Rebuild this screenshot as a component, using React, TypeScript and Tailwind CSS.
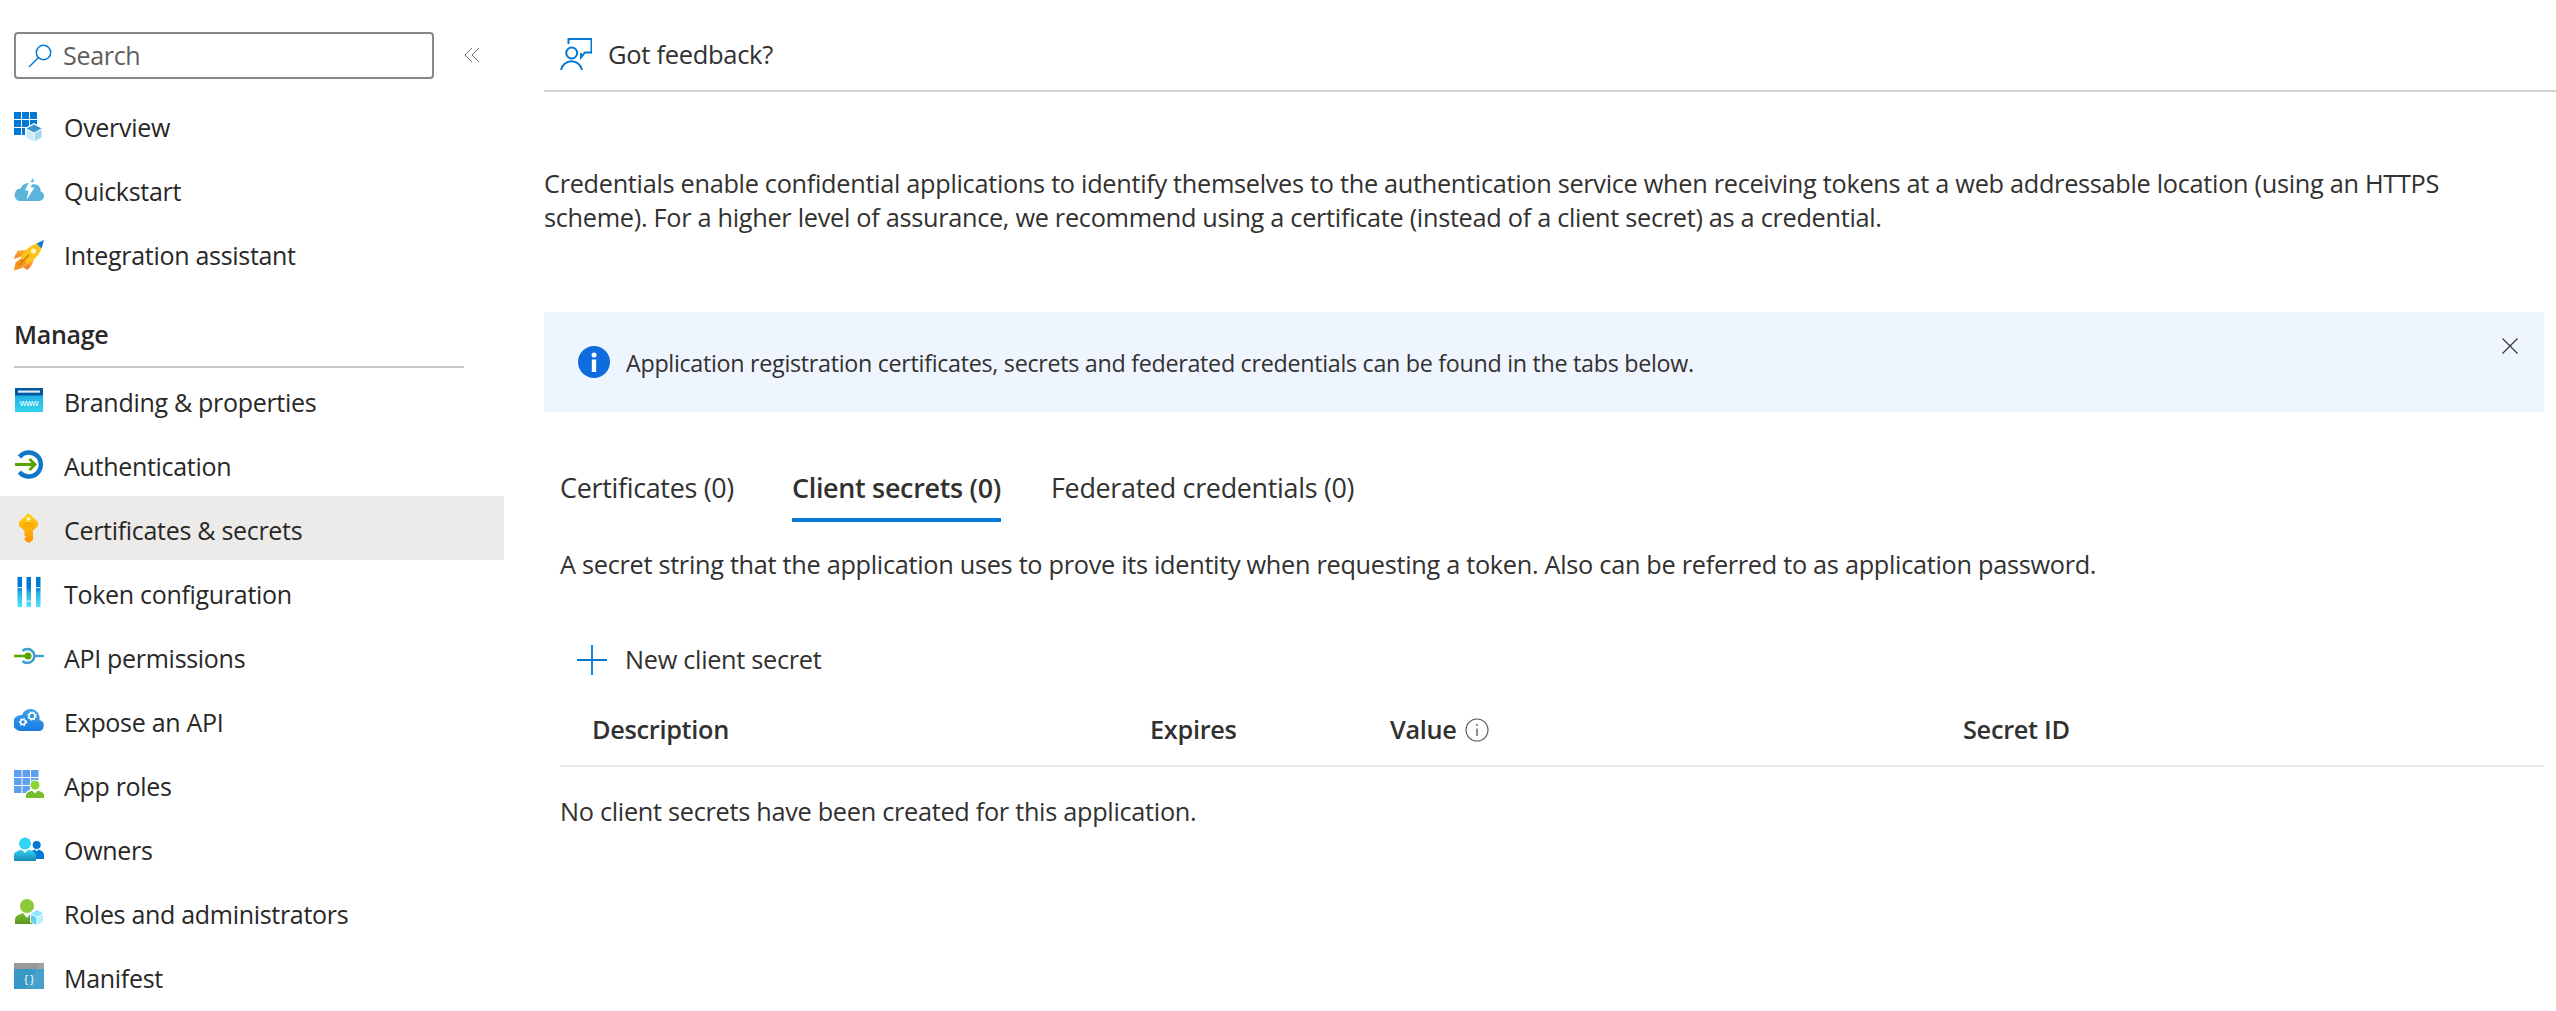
import { ReactNode } from "react";

const Icon = ({ children }: { children: ReactNode }) => (
    <svg viewBox="0 0 30 32" className="w-[30px] h-[32px] shrink-0">{children}</svg>
);

const OverviewIcon = () => (
    <Icon>
        {[0, 8, 16].map((x) => [1, 9, 17].map((y) => <rect key={`${x}-${y}`} x={x} y={y} width="7" height="7" fill="#0078d4" />))}
        <path d="M20 12 29 17V27L20 32 11 27V17Z" fill="#fff" />
        <path d="M20 13.500 27.500 17.500 20 21.500 12.500 17.500Z" fill="#3b94d0" />
        <path d="M12.500 18.500 19.500 22.300V30.500L12.500 26.500Z" fill="#cfeaf6" />
        <path d="M20.500 22.300 27.500 18.500V26.500L20.500 30.500Z" fill="#a3d9ef" />
    </Icon>
);

const QuickstartIcon = () => (
    <Icon>
        <path d="M4.800 26H25.200a4.800 4.800 0 0 0 1.300-9.400A6.200 6.200 0 0 0 19 9.500 8.500 8.500 0 0 0 6.500 13.500 6.500 6.500 0 0 0 4.800 26Z" fill="#5ab4dc" />
        <path d="M16.500 4 11 15.500H14.500L12.500 25 20.500 12.500H16.700L20 5Z" fill="#fff" />
        <path d="M19 3 16.500 7H20Z" fill="#5ab4dc" />
    </Icon>
);

const RocketIcon = () => (
    <Icon>
        <defs>
            <linearGradient id="fin" x1="0" y1="0" x2="0" y2="1">
                <stop offset="0" stopColor="#fbb03b" />
                <stop offset="1" stopColor="#f47b20" />
            </linearGradient>
        </defs>
        <path d="M12 11 4 11.500C2 14 .5 17 0 20L8 17Z" fill="url(#fin)" />
        <path d="M15 23 9 28 13 31C16 29 19 25 20 19Z" fill="url(#fin)" />
        <path d="M0 31.500 1.500 23.500 9 18 14 23 8 29Z" fill="#f7941d" />
        <path d="M22.500 4.500 27.500 9.500C25.500 15.500 19.500 22 13.500 25L6.500 18C10 11.500 16 7 22.500 4.500Z" fill="#fcc419" />
        <path d="M30 1 22.500 4.500 27.500 9.500Z" fill="#0f78c8" />
        <circle cx="19.500" cy="12" r="2.600" fill="#fff3c4" />
        <path d="M5 26 15 16" stroke="#d9730d" strokeWidth="1.600" />
    </Icon>
);

const BrandingIcon = () => (
    <Icon>
        <defs>
            <linearGradient id="brand" x1="0" y1="0" x2="0" y2="1">
                <stop offset="0" stopColor="#1c9fe0" />
                <stop offset="1" stopColor="#32d4f0" />
            </linearGradient>
        </defs>
        <rect x="1" y="4" width="28" height="24" fill="url(#brand)" />
        <rect x="1" y="4" width="28" height="7.500" fill="#00599f" />
        <rect x="4" y="6.500" width="22" height="2.200" fill="#dbeaf5" />
        <text x="15" y="22" textAnchor="middle" fill="#fff" fontSize="9" fontFamily="Liberation Sans, sans-serif">www</text>
    </Icon>
);

const AuthIcon = () => (
    <Icon>
        <path d="M5.500 9A12 12 0 1 1 5.500 24" fill="none" stroke="#0f77c9" strokeWidth="4.500" />
        <path d="M1 16.500H21M15.500 11 21 16.500 15.500 22" fill="none" stroke="#57a300" strokeWidth="2.800" />
    </Icon>
);

const KeyIcon = () => (
    <Icon>
        <defs>
            <linearGradient id="key" x1="0" y1="0" x2="0" y2="1">
                <stop offset="0" stopColor="#fcd116" />
                <stop offset="1" stopColor="#ff9300" />
            </linearGradient>
        </defs>
        <path d="M14.500 1.500 23.500 10V14L18.500 18.500V28L15 30.500 11 28V26H13V24H11V18.500L5.500 14V10Z" fill="url(#key)" stroke="url(#key)" strokeWidth="1" strokeLinejoin="round" />
        <circle cx="14.500" cy="7" r="2" fill="#fff1b8" />
        <path d="M9 11.500H20M9 14H20" stroke="#f59c00" strokeWidth="1" />
    </Icon>
);

const TokenIcon = () => (
    <Icon>
        <defs>
            <linearGradient id="token" x1="0" y1="0" x2="0" y2="1">
                <stop offset="0.35" stopColor="#0078d4" />
                <stop offset="0.55" stopColor="#2cb4e6" />
                <stop offset="1" stopColor="#50e6ff" />
            </linearGradient>
        </defs>
        <rect x="3.500" y="1" width="4.500" height="30" fill="url(#token)" />
        <rect x="12.500" y="1" width="4.500" height="30" fill="url(#token)" />
        <rect x="22" y="1" width="4.500" height="30" fill="url(#token)" />
        <rect x="3.500" y="11" width="4.500" height="1.200" fill="#dfeaf2" />
        <rect x="22" y="11" width="4.500" height="1.200" fill="#dfeaf2" />
        <rect x="12.500" y="24.500" width="4.500" height="1.200" fill="#dfeaf2" />
    </Icon>
);

const ApiIcon = () => (
    <Icon>
        <path d="M8.500 11A7 7 0 1 1 8.500 21M21 16H30" fill="none" stroke="#3f9fcf" strokeWidth="2.600" />
        <path d="M0 16H13" stroke="#57a300" strokeWidth="2.600" />
        <circle cx="14" cy="16" r="3.500" fill="#57a300" />
    </Icon>
);

const Gear = ({ x, y, r }: { x: number; y: number; r: number }) => (
    <g fill="none" stroke="#fff">
        <circle cx={x} cy={y} r={r} strokeWidth="1.400" />
        <circle cx={x} cy={y} r={r + 1} strokeWidth="1.400" strokeDasharray="1.600 1.600" />
    </g>
);

const ExposeIcon = () => (
    <Icon>
        <defs>
            <linearGradient id="expose" x1="0" y1="0" x2="0" y2="1">
                <stop offset="0" stopColor="#3fa3ea" />
                <stop offset="1" stopColor="#1b7be0" />
            </linearGradient>
        </defs>
        <path d="M6 27H24.500a5.500 5.500 0 0 0 .8-10.900A9 9 0 0 0 16 5 9.500 9.500 0 0 0 8 11 8 8 0 0 0 6 27Z" fill="url(#expose)" />
        <Gear x={9} y={18} r={2.400} />
        <Gear x={18} y={12} r={3} />
    </Icon>
);

const AppRolesIcon = () => (
    <Icon>
        {[0, 8.500, 17].map((x) => [2, 10, 18].map((y) => <rect key={`${x}-${y}`} x={x} y={y} width="7.500" height="7" fill="#5ea0ef" />))}
        <path d="M11 31V27C11 24 15 22 17 21H25C27 22 31 24 31 27V31Z" fill="#fff" />
        <path d="M12 30V27C12 24.500 16 23.500 18 22.500L21 25.500 24 22.500C26 23.500 30 24.500 30 27V30Z" fill="#76bc2d" />
        <circle cx="21" cy="17" r="5.500" fill="#fff" />
        <circle cx="21" cy="17" r="4.500" fill="#86d633" />
    </Icon>
);

const OwnersIcon = () => (
    <Icon>
        <defs>
            <linearGradient id="owner" x1="0" y1="0" x2="0" y2="1">
                <stop offset="0" stopColor="#32d4f5" />
                <stop offset="1" stopColor="#198ab3" />
            </linearGradient>
        </defs>
        <circle cx="22.700" cy="13" r="4" fill="#0078d4" />
        <path d="M15 27V22C16 19 19 18.500 21 17.500L22.700 19.500 24.500 17.500C26.500 18.500 29.500 19 30 22.500V27Z" fill="#0078d4" />
        <path d="M0 29V23C0 20 4 19 7.500 17.500L11 21 14.500 17.500C18 19 22 20 22 23V29Z" fill="url(#owner)" />
        <circle cx="11" cy="11.500" r="6" fill="#32d4f5" />
    </Icon>
);

const RolesIcon = () => (
    <Icon>
        <defs>
            <linearGradient id="roles" x1="0" y1="0" x2="0" y2="1">
                <stop offset="0" stopColor="#76bc2d" />
                <stop offset="1" stopColor="#5e9624" />
            </linearGradient>
        </defs>
        <path d="M1 28V23.500C1 19.500 6 18.500 9 17L13 22 17 17C20 18.500 25 19.500 25 23.500V28Z" fill="url(#roles)" />
        <circle cx="13" cy="10" r="7" fill="#8cc83c" />
        <path d="M23 13 30 17V26L23 30 16 26V17Z" fill="#fff" />
        <path d="M23 14 29 17.500 23 21 17 17.500Z" fill="#8fe6fa" />
        <path d="M17 18.500 22.500 21.500V29L17 25.500Z" fill="#5ed0f0" />
        <path d="M23.500 21.500 29 18.500V25.500L23.500 29Z" fill="#b4f0fc" />
    </Icon>
);

const ManifestIcon = () => (
    <Icon>
        <rect x="0" y="3" width="30" height="26" fill="#3999c6" />
        <rect x="0" y="3" width="30" height="6" fill="#999" />
        <path d="M30 3H26L12 29H30Z" fill="#fff" opacity="0.08" />
        <text x="15" y="23" textAnchor="middle" fill="#fff" fontSize="11" fontFamily="Liberation Sans, sans-serif">{"{ }"}</text>
    </Icon>
);

const topItems = [
    { name: "Overview", icon: <OverviewIcon /> },
    { name: "Quickstart", icon: <QuickstartIcon /> },
    { name: "Integration assistant", icon: <RocketIcon /> },
];

const manageItems = [
    { name: "Branding & properties", icon: <BrandingIcon /> },
    { name: "Authentication", icon: <AuthIcon /> },
    { name: "Certificates & secrets", icon: <KeyIcon />, active: true },
    { name: "Token configuration", icon: <TokenIcon /> },
    { name: "API permissions", icon: <ApiIcon /> },
    { name: "Expose an API", icon: <ExposeIcon /> },
    { name: "App roles", icon: <AppRolesIcon /> },
    { name: "Owners", icon: <OwnersIcon /> },
    { name: "Roles and administrators", icon: <RolesIcon /> },
    { name: "Manifest", icon: <ManifestIcon /> },
];

const NavItem = ({ name, icon, active, lower }: { name: string; icon: ReactNode; active?: boolean; lower?: boolean }) => (
    <div className={`h-16 w-[504px] flex items-center gap-5 pl-[14px] text-[#292827] ${active ? "bg-[#edebe9]" : ""}`}>
        {icon}
        <span className={lower ? "pt-[5px]" : "pt-[2px]"}>{name}</span>
    </div>
);

const Sidebar = () => (
    <aside className="w-[544px] shrink-0 text-[25px]">
        <div className="h-[95px] pt-8 pl-[14px] flex items-start">
            <div className="w-[420px] h-[47px] border-2 border-[#8a8886] rounded-[4px] flex items-center pl-3 gap-[11px] text-[#605e5c]">
                <svg viewBox="0 0 24 24" className="w-6 h-6 shrink-0" fill="none" stroke="#0078d4" strokeWidth="1.500">
                    <circle cx="15.500" cy="8.500" r="7.200" />
                    <path d="M10.500 13.500 1 23" />
                </svg>
                <span>Search</span>
            </div>
            <svg viewBox="0 0 16 16" className="w-4 h-4 ml-[30px] mt-[15px]" fill="none" stroke="#605e5c" strokeWidth="0.900">
                <path d="M8 1 1 8 8 15M15 1 8 8 15 15" />
            </svg>
        </div>
        {topItems.map((item) => <NavItem key={item.name} {...item} />)}
        <div className="h-[79px] pl-[14px] pt-[28px] font-semibold text-[#292827] leading-[38px]">Manage</div>
        <div className="ml-[14px] w-[450px] h-[2px] bg-[#c8c6c4]"></div>
        {manageItems.map((item) => <NavItem key={item.name} {...item} lower />)}
    </aside>
);

const Main = () => (
    <main className="flex-1 min-w-0 pr-3 text-[#323130] text-[25.3px]">
        <div className="-mr-3 h-[92px] border-b-2 border-[#d2d0ce] flex items-center gap-4 pl-4 pt-[18px] text-[25.5px]">
            <svg viewBox="0 0 32 32" className="w-8 h-8 shrink-0" fill="none" stroke="#0078d4" strokeWidth="2">
                <circle cx="11.700" cy="15" r="5.500" />
                <path d="M1 32A10.700 10.700 0 0 1 22 32" />
                <path d="M8.500 6V1H31.500V14.500H25L21 19.500V15" />
            </svg>
            <span>Got feedback?</span>
        </div>
        <p className="mt-[74px] leading-[34px] max-w-[1930px]">
            Credentials enable confidential applications to identify themselves to the authentication service when receiving tokens at a web addressable location (using an HTTPS scheme). For a higher level of assurance, we recommend using a certificate (instead of a client secret) as a credential.
        </p>
        <div className="mt-[78px] h-[100px] bg-[#eef5fe] rounded-[4px] flex items-center pl-[34px] pr-[26px] gap-4">
            <svg viewBox="0 0 32 32" className="w-8 h-8 shrink-0">
                <circle cx="16" cy="16" r="16" fill="#0f6cdc" />
                <circle cx="16" cy="9" r="2.500" fill="#fff" />
                <rect x="13.800" y="13.500" width="4.400" height="12.500" fill="#fff" />
            </svg>
            <span className="flex-1 text-[23.3px] pt-[2px]">Application registration certificates, secrets and federated credentials can be found in the tabs below.</span>
            <svg viewBox="0 0 16 16" className="w-4 h-4 self-start mt-[26px]" fill="none" stroke="#323130" strokeWidth="1.100">
                <path d="M.5.5 15.500 15.500M15.500.5.5 15.500" />
            </svg>
        </div>
        <div className="mt-[46px] pl-4 flex h-[64px] text-[26.9px]">
            <div className="pt-[10px]">Certificates (0)</div>
            <div className="ml-[58px] pt-[10px] font-semibold border-b-4 border-[#0078d4]">Client secrets (0)</div>
            <div className="ml-[50px] pt-[10px]">Federated credentials (0)</div>
        </div>
        <p className="mt-[25px] pl-4 leading-[34px]">A secret string that the application uses to prove its identity when requesting a token. Also can be referred to as application password.</p>
        <div className="mt-[57px] h-[44px] pl-[33px] flex items-center gap-[18px]">
            <svg viewBox="0 0 30 30" className="w-[30px] h-[30px] shrink-0" fill="none" stroke="#0078d4" strokeWidth="1.800">
                <path d="M15 0V30M0 15H30" />
            </svg>
            <span>New client secret</span>
        </div>
        <div className="mt-[13px] ml-4 h-[72px] border-b-2 border-[#edebe9] grid grid-cols-[558px_240px_573px_1fr] items-center font-semibold pl-[32px]">
            <div>Description</div>
            <div>Expires</div>
            <div className="flex items-center gap-2">
                Value
                <svg viewBox="0 0 24 24" className="w-6 h-6" fill="none" stroke="#605e5c" strokeWidth="1.100">
                    <circle cx="12" cy="12" r="11" />
                    <path d="M12 10.500V18M12 6V8" strokeWidth="1.400" />
                </svg>
            </div>
            <div>Secret ID</div>
        </div>
        <div className="mt-[27px] pl-4 leading-[34px]">No client secrets have been created for this application.</div>
    </main>
);

const App = () => {
    return (
        <div className="w-[2556px] h-[1011px] overflow-hidden bg-white flex font-['Open_Sans',sans-serif] tracking-[-0.3px]">
            <Sidebar />
            <Main />
        </div>
    );
};

export default App;
